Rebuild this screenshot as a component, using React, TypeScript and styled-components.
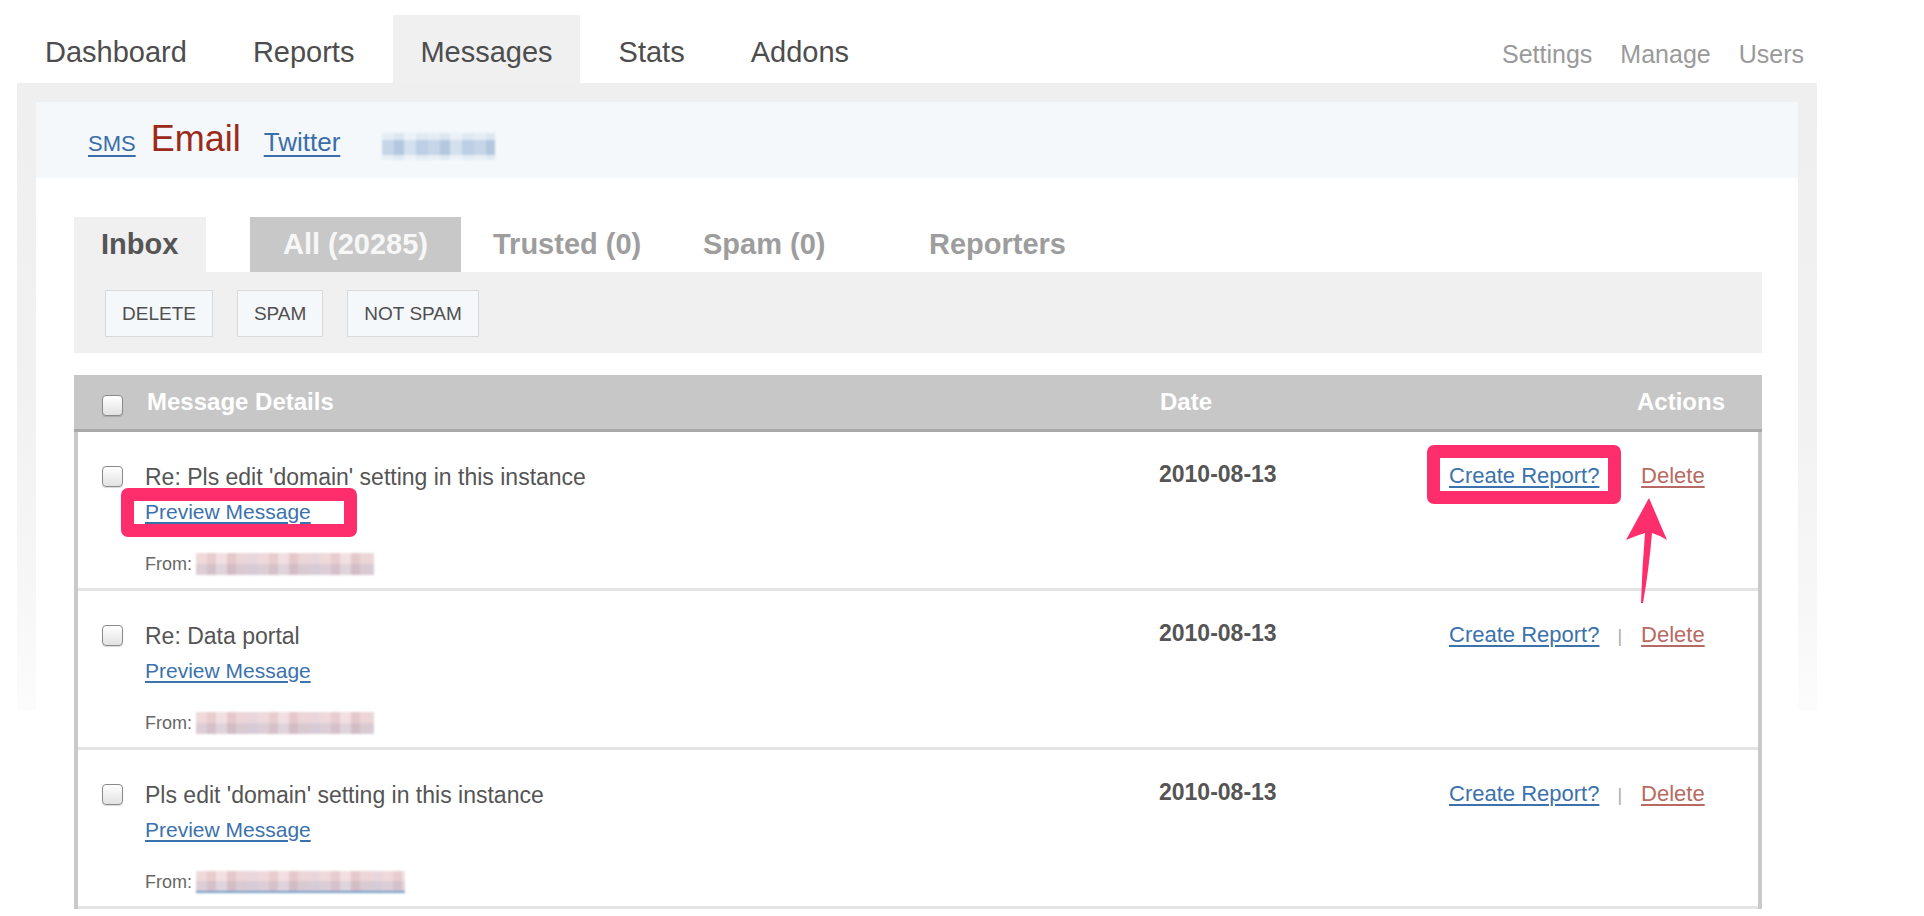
import React from "react";
import styled, { createGlobalStyle } from "styled-components";

const GlobalStyle = createGlobalStyle`
  html, body { margin: 0; padding: 0; background: #fff; }
  body { font-family: "Liberation Sans", Arial, sans-serif; }
  * { box-sizing: border-box; }
`;

const Page = styled.div`
  width: 1924px;
  height: 916px;
  overflow: hidden;
  padding-left: 17px;
`;

const TopNav = styled.nav`
  width: 1800px;
  height: 83px;
  padding-top: 15px;
  display: flex;
  justify-content: space-between;
`;

const NavGroup = styled.div<{ $gap: number; $pl?: number; $pr?: number }>`
  display: flex;
  gap: ${(p) => p.$gap}px;
  padding-left: ${(p) => p.$pl ?? 0}px;
  padding-right: ${(p) => p.$pr ?? 0}px;
`;

const NavTab = styled.a<{ $active?: boolean }>`
  display: block;
  height: 68px;
  padding: 6px 27px 0;
  line-height: 62px;
  font-size: 29px;
  color: #4d4d4d;
  text-decoration: none;
  background: ${(p) => (p.$active ? "#f0f0f0" : "transparent")};
`;

const UtilLink = styled.a`
  display: block;
  padding-top: 8px;
  line-height: 62px;
  font-size: 25px;
  color: #9a9a9a;
  text-decoration: none;
`;

const Frame = styled.section`
  width: 1800px;
  padding: 19px 19px 0 19px;
  background-image: linear-gradient(
    to bottom,
    #efefef 0px,
    #f1f1f1 300px,
    #f7f7f7 520px,
    #fcfcfc 627px
  );
  background-size: 100% 627px;
  background-repeat: no-repeat;
`;

const SourceBar = styled.div`
  height: 76px;
  background: #f4f8fb;
  display: flex;
  align-items: baseline;
  padding: 17px 0 0 52px;
`;

const SourceLink = styled.a<{ $ml?: number; $size: number }>`
  font-size: ${(p) => p.$size}px;
  line-height: 40px;
  color: #3b6ea8;
  text-decoration: underline;
  text-underline-offset: 4px;
  margin-left: ${(p) => p.$ml ?? 0}px;
`;

const SourceCurrent = styled.span<{ $ml?: number }>`
  font-size: 36px;
  line-height: 40px;
  color: #9c2a1b;
  margin-left: ${(p) => p.$ml ?? 0}px;
`;

const BlurTag = styled.span<{ $ml?: number }>`
  align-self: flex-start;
  margin-top: 14px;
  margin-left: ${(p) => p.$ml ?? 0}px;
  width: 113px;
  height: 27px;
  background-image: linear-gradient(
      to bottom,
      rgba(255, 255, 255, 0.55) 0 25%,
      rgba(255, 255, 255, 0) 25% 80%,
      rgba(255, 255, 255, 0.6) 80%
    ),
    repeating-linear-gradient(
      90deg,
      #c6d6e8 0 12px,
      #b3c8df 12px 22px,
      #d3e0ee 22px 34px,
      #bccfe4 34px 46px
    );
  filter: blur(1px);
`;

const Content = styled.div`
  background: #fff;
  padding: 39px 36px 0 38px;
`;

const TabRow = styled.div`
  display: flex;
  height: 55px;
`;

const FilterTab = styled.a<{ $w?: number; $ml?: number; $kind?: "label" | "active" | "plain" }>`
  display: block;
  height: 55px;
  line-height: 55px;
  font-size: 29px;
  font-weight: bold;
  text-decoration: none;
  white-space: nowrap;
  width: ${(p) => (p.$w ? `${p.$w}px` : "auto")};
  margin-left: ${(p) => p.$ml ?? 0}px;
  padding-left: ${(p) => (p.$kind === "label" ? "27px" : "0")};
  text-align: ${(p) => (p.$kind === "active" ? "center" : "left")};
  color: ${(p) => (p.$kind === "label" ? "#555" : p.$kind === "active" ? "#f7f7f7" : "#9d9d9d")};
  background: ${(p) => (p.$kind === "label" ? "#f0f0f0" : p.$kind === "active" ? "#c8c8c8" : "transparent")};
`;

const Toolbar = styled.div`
  height: 81px;
  background: #f0f0f0;
  display: flex;
  align-items: flex-start;
  gap: 24px;
  padding: 18px 0 0 31px;
`;

const ToolButton = styled.button`
  height: 47px;
  padding: 0 16px;
  font-family: "Liberation Sans", Arial, sans-serif;
  font-size: 19px;
  color: #4f4f4f;
  text-transform: uppercase;
  background: #f5f8fb;
  border: 1px solid #d9d9d9;
  border-radius: 0;
`;

const Table = styled.div`
  margin-top: 22px;
`;

const HeaderRow = styled.div`
  display: grid;
  grid-template-columns: 45px 1fr 290px 275px;
  align-items: center;
  height: 57px;
  padding: 0 37px 0 28px;
  background: #c7c7c7;
  border-bottom: 3px solid #a9a9a9;
  color: #fff;
  font-size: 24px;
  font-weight: bold;
`;

const HeadCell = styled.div<{ $end?: boolean }>`
  justify-self: ${(p) => (p.$end ? "end" : "start")};
`;

const CheckBox = styled.span<{ $mt?: number }>`
  display: block;
  width: 21px;
  height: 21px;
  margin-top: ${(p) => p.$mt ?? 0}px;
  border: 1.5px solid #8a8a8a;
  border-radius: 4px;
  background: linear-gradient(#ffffff, #e2e2e2);
  box-shadow: 0 1px 1px rgba(0, 0, 0, 0.15);
`;

const Body = styled.div`
  border-left: 4px solid #c9c9c9;
  border-right: 4px solid #c9c9c9;
`;

const Row = styled.div`
  display: grid;
  grid-template-columns: 43px 1fr 290px 262px;
  align-items: start;
  padding: 0 47px 0 24px;
  border-bottom: 3px solid #e4e4e4;
`;

const Details = styled.div`
  display: flex;
  flex-direction: column;
  align-items: flex-start;
  padding: 32px 0 13px;
`;

const Subject = styled.div`
  font-size: 23px;
  line-height: 26px;
  color: #555;
`;

const PreviewLink = styled.a`
  position: relative;
  margin-top: 9px;
  font-size: 21px;
  line-height: 26px;
  color: #3b72ad;
  text-decoration: underline;
  text-underline-offset: 3px;
`;

const FromLine = styled.div`
  display: flex;
  align-items: center;
  margin-top: 28px;
  font-size: 18px;
  line-height: 22px;
  color: #666;
`;

const BlurEmail = styled.span<{ $w: number; $underline?: boolean }>`
  display: inline-block;
  width: ${(p) => p.$w}px;
  height: 22px;
  margin-left: 4px;
  background-image: linear-gradient(
      to bottom,
      rgba(240, 214, 216, 0.55) 0 48%,
      rgba(200, 190, 205, 0.55) 48% 100%
    ),
    repeating-linear-gradient(
      90deg,
      #e9cfd1 0 11px,
      #d7aeb2 11px 20px,
      #f0e0e1 20px 31px,
      #cfa4a8 31px 40px,
      #e2c6c9 40px 52px,
      #d9c9d6 52px 62px
    );
  border-bottom: ${(p) => (p.$underline ? "2px solid #5b8cc0" : "0")};
  filter: blur(1px);
  opacity: 0.85;
`;

const DateCell = styled.div`
  padding-top: 29px;
  font-size: 23px;
  line-height: 26px;
  font-weight: bold;
  color: #555;
`;

const ActionsCell = styled.div`
  position: relative;
  display: flex;
  align-items: baseline;
  white-space: nowrap;
  padding-top: 31px;
  line-height: 26px;
`;

const ActionLink = styled.a<{ $danger?: boolean }>`
  position: relative;
  white-space: nowrap;
  font-size: 22px;
  color: ${(p) => (p.$danger ? "#b86a62" : "#3b72ad")};
  text-decoration: underline;
  text-underline-offset: 3px;
`;

const Sep = styled.span`
  margin: 0 19px 0 18px;
  font-size: 18px;
  color: #aaa;
`;

const Highlight = styled.span<{ $l: number; $t: number; $w: number; $h: number }>`
  position: absolute;
  left: ${(p) => p.$l}px;
  top: ${(p) => p.$t}px;
  width: ${(p) => p.$w}px;
  height: ${(p) => p.$h}px;
  border: 13px solid #fe2d6c;
  border-radius: 7px;
  pointer-events: none;
  z-index: 2;
`;

const ArrowMark = styled.svg`
  position: absolute;
  left: 172px;
  top: 62px;
  z-index: 2;
  overflow: visible;
`;

type Msg = {
  subject: string;
  fromW: number;
  fromUnderline?: boolean;
  annotated?: boolean;
};

const messages: Msg[] = [
  { subject: "Re: Pls edit 'domain' setting in this instance", fromW: 178, annotated: true },
  { subject: "Re: Data portal", fromW: 178 },
  { subject: "Pls edit 'domain' setting in this instance", fromW: 209, fromUnderline: true },
];

export default function App() {
  return (
    <>
      <GlobalStyle />
      <Page>
        <TopNav>
          <NavGroup $gap={12} $pl={1}>
            <NavTab>Dashboard</NavTab>
            <NavTab>Reports</NavTab>
            <NavTab $active>Messages</NavTab>
            <NavTab>Stats</NavTab>
            <NavTab>Addons</NavTab>
          </NavGroup>
          <NavGroup $gap={28} $pr={13}>
            <UtilLink>Settings</UtilLink>
            <UtilLink>Manage</UtilLink>
            <UtilLink>Users</UtilLink>
          </NavGroup>
        </TopNav>
        <Frame>
          <SourceBar>
            <SourceLink $size={22}>SMS</SourceLink>
            <SourceCurrent $ml={15}>Email</SourceCurrent>
            <SourceLink $size={26} $ml={23}>Twitter</SourceLink>
            <BlurTag $ml={42} />
          </SourceBar>
          <Content>
            <TabRow>
              <FilterTab $kind="label" $w={132}>Inbox</FilterTab>
              <FilterTab $kind="active" $w={211} $ml={44}>All (20285)</FilterTab>
              <FilterTab $kind="plain" $w={210} $ml={32}>Trusted (0)</FilterTab>
              <FilterTab $kind="plain" $w={226}>Spam (0)</FilterTab>
              <FilterTab $kind="plain">Reporters</FilterTab>
            </TabRow>
            <Toolbar>
              <ToolButton>Delete</ToolButton>
              <ToolButton>Spam</ToolButton>
              <ToolButton>Not Spam</ToolButton>
            </Toolbar>
            <Table>
              <HeaderRow>
                <CheckBox $mt={6} />
                <HeadCell>Message Details</HeadCell>
                <HeadCell>Date</HeadCell>
                <HeadCell $end>Actions</HeadCell>
              </HeaderRow>
              <Body>
                {messages.map((m, i) => (
                  <Row key={i}>
                    <CheckBox $mt={34} />
                    <Details>
                      <Subject>{m.subject}</Subject>
                      <PreviewLink>
                        Preview Message
                        {m.annotated && <Highlight $l={-24} $t={-11} $w={236} $h={49} />}
                      </PreviewLink>
                      <FromLine>
                        From:
                        <BlurEmail $w={m.fromW} $underline={m.fromUnderline} />
                      </FromLine>
                    </Details>
                    <DateCell>2010-08-13</DateCell>
                    <ActionsCell>
                      <ActionLink>
                        Create Report?
                        {m.annotated && <Highlight $l={-22} $t={-18} $w={194} $h={59} />}
                      </ActionLink>
                      <Sep>|</Sep>
                      <ActionLink $danger>Delete</ActionLink>
                      {m.annotated && (
                        <ArrowMark width="50" height="112" viewBox="0 0 50 112">
                          <path
                            d="M28 4 L46 46 Q38 41 31 39 Q28 75 22 109 L20 109 Q21 75 24 39 Q17 41 5 46 Z"
                            fill="#fe2d6c"
                          />
                        </ArrowMark>
                      )}
                    </ActionsCell>
                  </Row>
                ))}
              </Body>
            </Table>
          </Content>
        </Frame>
      </Page>
    </>
  );
}
